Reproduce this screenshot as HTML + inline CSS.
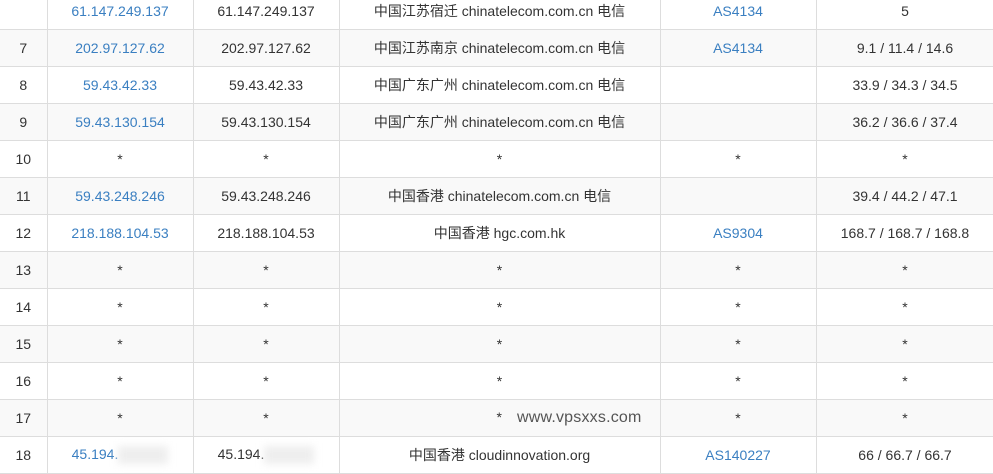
<!DOCTYPE html>
<html><head><meta charset="utf-8"><style>
body{margin:0;width:993px;height:470px;overflow:hidden;background:#fff;position:relative;font-family:"Liberation Sans","Noto Sans CJK SC",sans-serif;font-size:14px;color:#333}
table{position:absolute;left:0;top:-8px;border-collapse:collapse;table-layout:fixed;width:994px}
td{height:36px;border:1px solid #ddd;text-align:center;padding:0;white-space:nowrap}
tr:nth-child(even) td{background:#f9f9f9}
td:first-child{border-left:none}
a{color:#3a7fc1;text-decoration:none}
.bl{display:inline-block;width:50px;height:18px;background:#eee;filter:blur(4px);vertical-align:middle}
.wm{color:#555;font-size:16px;letter-spacing:.2px}
</style></head><body>
<table>
<colgroup><col style="width:47px"><col style="width:146px"><col style="width:146px"><col style="width:321px"><col style="width:156px"><col style="width:178px"></colgroup>
<tr><td></td><td><a>61.147.249.137</a></td><td>61.147.249.137</td><td>中国江苏宿迁 chinatelecom.com.cn 电信</td><td><a>AS4134</a></td><td>5</td></tr>
<tr><td>7</td><td><a>202.97.127.62</a></td><td>202.97.127.62</td><td>中国江苏南京 chinatelecom.com.cn 电信</td><td><a>AS4134</a></td><td>9.1 / 11.4 / 14.6</td></tr>
<tr><td>8</td><td><a>59.43.42.33</a></td><td>59.43.42.33</td><td>中国广东广州 chinatelecom.com.cn 电信</td><td></td><td>33.9 / 34.3 / 34.5</td></tr>
<tr><td>9</td><td><a>59.43.130.154</a></td><td>59.43.130.154</td><td>中国广东广州 chinatelecom.com.cn 电信</td><td></td><td>36.2 / 36.6 / 37.4</td></tr>
<tr><td>10</td><td>*</td><td>*</td><td>*</td><td>*</td><td>*</td></tr>
<tr><td>11</td><td><a>59.43.248.246</a></td><td>59.43.248.246</td><td>中国香港 chinatelecom.com.cn 电信</td><td></td><td>39.4 / 44.2 / 47.1</td></tr>
<tr><td>12</td><td><a>218.188.104.53</a></td><td>218.188.104.53</td><td>中国香港 hgc.com.hk</td><td><a>AS9304</a></td><td>168.7 / 168.7 / 168.8</td></tr>
<tr><td>13</td><td>*</td><td>*</td><td>*</td><td>*</td><td>*</td></tr>
<tr><td>14</td><td>*</td><td>*</td><td>*</td><td>*</td><td>*</td></tr>
<tr><td>15</td><td>*</td><td>*</td><td>*</td><td>*</td><td>*</td></tr>
<tr><td>16</td><td>*</td><td>*</td><td>*</td><td>*</td><td>*</td></tr>
<tr><td>17</td><td>*</td><td>*</td><td style="text-align:left"><span style="margin-left:157px">*</span><span class="wm" style="margin-left:15px">www.vpsxxs.com</span></td><td>*</td><td>*</td></tr>
<tr><td>18</td><td><a>45.194.</a><span class="bl"></span></td><td>45.194.<span class="bl"></span></td><td>中国香港 cloudinnovation.org</td><td><a>AS140227</a></td><td>66 / 66.7 / 66.7</td></tr>
</table>
</body></html>
